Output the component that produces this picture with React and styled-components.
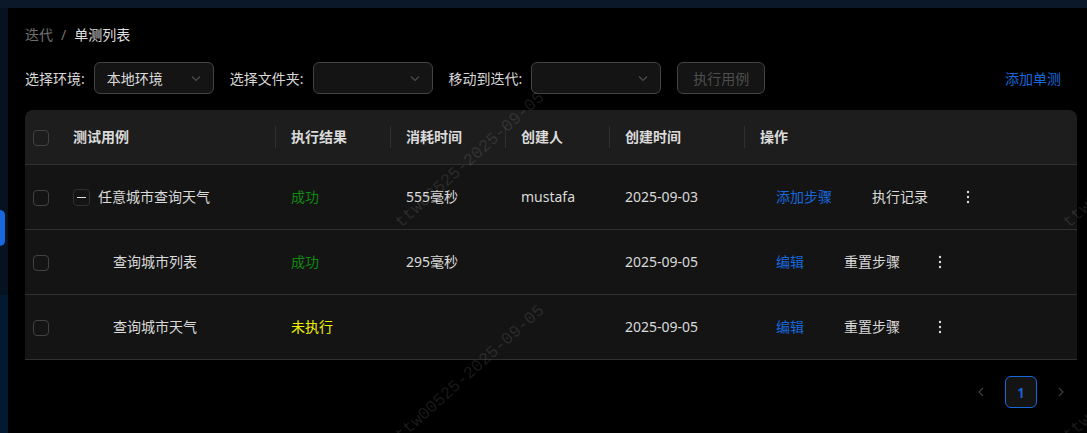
import React from 'react';
import styled, { createGlobalStyle } from 'styled-components';

const GlobalStyle = createGlobalStyle`
	html, body {
		margin: 0;
		padding: 0;
		background: #000;
	}
	body {
		font-family: 'Noto Sans', 'Noto Sans CJK SC', sans-serif;
		font-size: 14px;
		color: rgba(255, 255, 255, 0.85);
	}
	* {
		box-sizing: border-box;
	}
`;

const Shell = styled.div`
	position: relative;
	display: flex;
	flex-direction: column;
	height: 100vh;
	overflow: hidden;
`;

const TopBar = styled.div`
	height: 8px;
	flex: none;
	background: #0a1829;
`;

const Body = styled.div`
	display: flex;
	flex: 1;
	min-height: 0;
`;

const Sider = styled.div`
	width: 8px;
	flex: none;
	display: flex;
	flex-direction: column;
`;

const SiderTop = styled.div`
	height: 287px;
	background: #06121f;
	padding-top: 202px;
`;

const SiderActive = styled.div`
	width: 5px;
	height: 36px;
	background: #1668dc;
	border-radius: 0 6px 6px 0;
`;

const SiderBottom = styled.div`
	flex: 1;
	background: #021a30;
`;

const Main = styled.main`
	flex: 1;
	background: #000;
	padding: 16px 10px 0 17px;
	display: flex;
	flex-direction: column;
`;

const Breadcrumb = styled.div`
	display: flex;
	align-items: center;
	height: 22px;
	line-height: 22px;
	margin-bottom: 16px;
`;

const Crumb = styled.span`
	color: ${p => (p.$current ? 'rgba(255,255,255,0.88)' : 'rgba(255,255,255,0.45)')};
`;

const Sep = styled.span`
	margin: 0 8px;
	color: rgba(255, 255, 255, 0.45);
`;

const Toolbar = styled.div`
	display: flex;
	align-items: center;
	height: 32px;
	margin-bottom: 16px;
`;

const Field = styled.div`
	display: flex;
	align-items: center;
	margin-right: 16px;
`;

const Label = styled.label`
	margin-right: 9px;
	color: rgba(255, 255, 255, 0.85);
`;

const Select = styled.div`
	width: ${p => p.$width}px;
	height: 32px;
	display: flex;
	align-items: center;
	justify-content: space-between;
	padding: 0 11px 0 12px;
	background: #141414;
	border: 1px solid #424242;
	border-radius: 6px;
	color: rgba(255, 255, 255, 0.85);
	svg {
		color: rgba(255, 255, 255, 0.25);
	}
`;

const GhostButton = styled.button`
	height: 32px;
	padding: 0 15px;
	background: #141414;
	border: 1px solid #424242;
	border-radius: 6px;
	color: rgba(255, 255, 255, 0.25);
	font: inherit;
	cursor: not-allowed;
`;

const Spacer = styled.div`
	flex: 1;
`;

const LinkText = styled.a`
	color: #1668dc;
	margin-right: 16px;
	cursor: pointer;
`;

const TableWrap = styled.div`
	border-radius: 8px 8px 0 0;
	overflow: hidden;
`;

const Table = styled.table`
	width: 100%;
	table-layout: fixed;
	border-collapse: separate;
	border-spacing: 0;
`;

const Th = styled.th`
	position: relative;
	padding: 16px;
	line-height: 22px;
	text-align: ${p => (p.$center ? 'center' : 'left')};
	font-weight: 600;
	color: rgba(255, 255, 255, 0.85);
	background: #1d1d1d;
	border-bottom: 1px solid #303030;
	&::before {
		content: '';
		display: ${p => (p.$divider ? 'block' : 'none')};
		position: absolute;
		left: 0;
		top: 50%;
		width: 1px;
		height: 22px;
		transform: translateY(-50%);
		background: #303030;
	}
`;

const Td = styled.td`
	padding: 21px 16px;
	line-height: 22px;
	text-align: ${p => (p.$center ? 'center' : 'left')};
	background: #141414;
	border-bottom: 1px solid #303030;
	white-space: nowrap;
`;

const Checkbox = styled.span`
	display: inline-block;
	width: 16px;
	height: 16px;
	vertical-align: middle;
	border: 1px solid #424242;
	border-radius: 4px;
	background: transparent;
`;

const NameCell = styled.div`
	display: flex;
	align-items: center;
	padding-left: ${p => p.$indent}px;
`;

const ExpandIcon = styled.span`
	position: relative;
	width: 17px;
	height: 17px;
	margin-right: 8px;
	border: 1px solid #303030;
	border-radius: 4px;
	background: #141414;
	&::after {
		content: '';
		position: absolute;
		left: 3px;
		right: 3px;
		top: 7px;
		height: 1px;
		background: rgba(255, 255, 255, 0.85);
	}
`;

const Status = styled.span`
	color: ${p => p.$color};
`;

const Ops = styled.div`
	display: flex;
	align-items: center;
	gap: 8px;
	height: 22px;
`;

const OpButton = styled.button`
	height: 22px;
	padding: 0 15px;
	border: 1px solid transparent;
	background: transparent;
	font: inherit;
	line-height: 20px;
	color: ${p => (p.$primary ? '#1668dc' : 'rgba(255,255,255,0.85)')};
	cursor: pointer;
`;

const MoreButton = styled.button`
	width: 32px;
	height: 22px;
	display: flex;
	align-items: center;
	justify-content: center;
	padding: 0;
	border: none;
	background: transparent;
	color: rgba(255, 255, 255, 0.85);
`;

const Pager = styled.div`
	display: flex;
	justify-content: flex-end;
	gap: 8px;
	margin-top: 16px;
`;

const PageItem = styled.div`
	width: 32px;
	height: 32px;
	display: flex;
	align-items: center;
	justify-content: center;
	border-radius: 6px;
	border: 1px solid ${p => (p.$active ? '#1668dc' : 'transparent')};
	background: ${p => (p.$active ? '#141414' : 'transparent')};
	color: ${p => (p.$active ? '#1668dc' : 'rgba(255,255,255,0.25)')};
	font-weight: 600;
`;

const Watermarks = styled.div`
	position: absolute;
	inset: 0;
	pointer-events: none;
`;

const Mark = styled.span`
	position: absolute;
	transform: translate(-50%, -50%) rotate(-42deg);
	font-family: 'Liberation Mono', monospace;
	font-size: 17px;
	white-space: nowrap;
	color: rgba(255, 255, 255, 0.11);
`;

const Chevron = ({ dir = 'down' }) => {
	const paths = {
		down: 'M2 4.5 L6 8.5 L10 4.5',
		left: 'M8 2 L4 6 L8 10',
		right: 'M4 2 L8 6 L4 10'
	};
	return (
		<svg width='12' height='12' viewBox='0 0 12 12' fill='none'>
			<path d={paths[dir]} stroke='currentColor' strokeWidth='1.1' />
		</svg>
	);
};

const MoreIcon = () => (
	<svg width='14' height='14' viewBox='0 0 14 14' fill='currentColor'>
		<circle cx='7' cy='2' r='1.2' />
		<circle cx='7' cy='7' r='1.2' />
		<circle cx='7' cy='12' r='1.2' />
	</svg>
);

const columns = [
	{ key: 'check', width: 32 },
	{ key: 'name', title: '测试用例', width: 218 },
	{ key: 'result', title: '执行结果', width: 115, divider: true },
	{ key: 'cost', title: '消耗时间', width: 115, divider: true },
	{ key: 'owner', title: '创建人', width: 104, divider: true },
	{ key: 'created', title: '创建时间', width: 135, divider: true },
	{ key: 'ops', title: '操作', divider: true }
];

const rows = [
	{
		name: '任意城市查询天气',
		parent: true,
		result: '成功',
		cost: '555毫秒',
		owner: 'mustafa',
		created: '2025-09-03',
		ops: ['添加步骤', '执行记录']
	},
	{
		name: '查询城市列表',
		result: '成功',
		cost: '295毫秒',
		owner: '',
		created: '2025-09-05',
		ops: ['编辑', '重置步骤']
	},
	{
		name: '查询城市天气',
		result: '未执行',
		cost: '',
		owner: '',
		created: '2025-09-05',
		ops: ['编辑', '重置步骤']
	}
];

const statusColor = {
	成功: '#0f8a0f',
	未执行: '#f2f200'
};

const marks = [
	{ x: 470, y: 160 },
	{ x: 470, y: 373 },
	{ x: 1138, y: 160 },
	{ x: 1138, y: 373 }
];

const App = () => (
	<>
		<GlobalStyle />
		<Shell>
			<TopBar />
			<Body>
				<Sider>
					<SiderTop>
						<SiderActive />
					</SiderTop>
					<SiderBottom />
				</Sider>
				<Main>
					<Breadcrumb>
						<Crumb>迭代</Crumb>
						<Sep>/</Sep>
						<Crumb $current>单测列表</Crumb>
					</Breadcrumb>

					<Toolbar>
						<Field>
							<Label>选择环境:</Label>
							<Select $width={120}>
								<span>本地环境</span>
								<Chevron />
							</Select>
						</Field>
						<Field>
							<Label>选择文件夹:</Label>
							<Select $width={120}>
								<span />
								<Chevron />
							</Select>
						</Field>
						<Field>
							<Label>移动到迭代:</Label>
							<Select $width={130}>
								<span />
								<Chevron />
							</Select>
						</Field>
						<GhostButton disabled>执行用例</GhostButton>
						<Spacer />
						<LinkText>添加单测</LinkText>
					</Toolbar>

					<TableWrap>
						<Table>
							<colgroup>
								{columns.map(c => (
									<col key={c.key} style={c.width ? { width: c.width } : undefined} />
								))}
							</colgroup>
							<thead>
								<tr>
									{columns.map(c =>
										c.key === 'check' ? (
											<Th key={c.key} $center style={{ padding: '16px 0' }}>
												<Checkbox />
											</Th>
										) : (
											<Th key={c.key} $divider={c.divider}>
												{c.title}
											</Th>
										)
									)}
								</tr>
							</thead>
							<tbody>
								{rows.map((r, i) => (
									<tr key={i}>
										<Td $center style={{ padding: '21px 0' }}>
											<Checkbox />
										</Td>
										<Td>
											<NameCell $indent={r.parent ? 0 : 40}>
												{r.parent && <ExpandIcon />}
												{r.name}
											</NameCell>
										</Td>
										<Td>
											<Status $color={statusColor[r.result]}>{r.result}</Status>
										</Td>
										<Td>{r.cost}</Td>
										<Td>{r.owner}</Td>
										<Td>{r.created}</Td>
										<Td>
											<Ops>
												<OpButton $primary>{r.ops[0]}</OpButton>
												<OpButton>{r.ops[1]}</OpButton>
												<MoreButton>
													<MoreIcon />
												</MoreButton>
											</Ops>
										</Td>
									</tr>
								))}
							</tbody>
						</Table>
					</TableWrap>

					<Pager>
						<PageItem>
							<Chevron dir='left' />
						</PageItem>
						<PageItem $active>1</PageItem>
						<PageItem>
							<Chevron dir='right' />
						</PageItem>
					</Pager>
				</Main>
			</Body>
			<Watermarks>
				{marks.map((m, i) => (
					<Mark key={i} style={{ left: m.x, top: m.y }}>
						ttw00525-2025-09-05
					</Mark>
				))}
			</Watermarks>
		</Shell>
	</>
);

export default App;
